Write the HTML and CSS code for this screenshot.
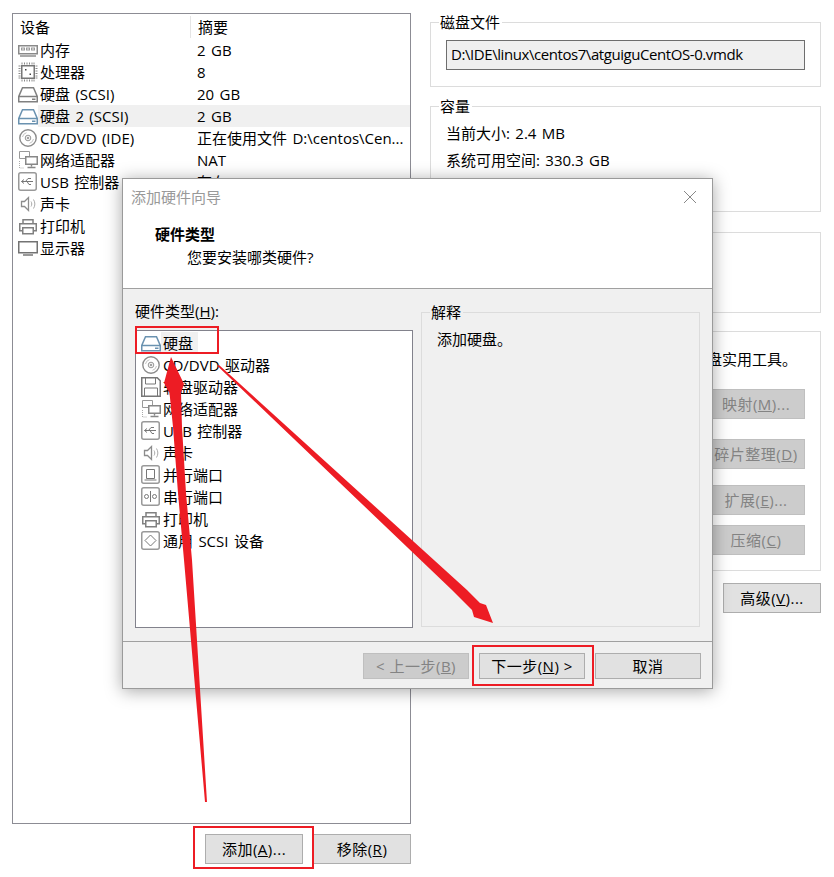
FILE: index.html
```html
<!DOCTYPE html>
<html lang="zh-CN">
<head>
  <meta charset="UTF-8">
  <title>添加硬件向导</title>
  <link rel="stylesheet" href="styles.css">
</head>
<body>
  <svg class="defs" width="0" height="0">
    <symbol id="i-mem" viewBox="0 0 20 20"><path d="M.75 5.750h18.500v8H.75z" fill="none" stroke="#8a8a8a" stroke-width="1.500"/><path d="M2 15h16v2H2z" fill="#aaa"/><path d="M3 7.500h4v3H3zM8 7.500h4v3H8zM13 7.500h4v3h-4z" fill="#999"/><path d="M4 8.500h2v1H4zM9 8.500h2v1H9zM14 8.500h2v1h-2z" fill="#eee"/></symbol>
    <symbol id="i-cpu" viewBox="0 0 20 20"><path d="M3.750 3.750h12.500v12.500H3.750z" fill="none" stroke="#777" stroke-width="1.500"/><path d="M4 .5v2M6.500.5v2M9 .5v2M11.500.5v2M14 .5v2M16 .5v2M4 17.500v2M6.500 17.500v2M9 17.500v2M11.500 17.500v2M14 17.500v2M16 17.500v2M.5 4h2M.5 6.500h2M.5 9h2M.5 11.500h2M.5 14h2M.5 16h2M17.500 4h2M17.500 6.500h2M17.500 9h2M17.500 11.500h2M17.500 14h2M17.500 16h2" stroke="#888"/><path d="M7 7h1.500v1.500H7zM11.500 11.500H13V13h-1.500z" fill="#444"/></symbol>
    <symbol id="i-disk" viewBox="0 0 20 20"><path d="M4.500 3.750h11l3.750 8.750v5.250H.75V12.500zM.75 12.500h18.500" fill="none" stroke="#808080" stroke-width="1.500"/><path d="M14 14.500h3.500V16H14z" fill="#808080"/></symbol>
    <symbol id="i-disk-b" viewBox="0 0 20 20"><path d="M4.500 3.750h11l3.750 8.750v5.250H.75V12.500zM.75 12.500h18.500" fill="none" stroke="#6a92b0" stroke-width="1.500"/><path d="M14 14.500h3.500V16H14z" fill="#6a92b0"/></symbol>
    <symbol id="i-cd" viewBox="0 0 20 20"><circle cx="10" cy="10" r="8.200" fill="#fff" stroke="#8c8c8c" stroke-width="1.400"/><circle cx="10" cy="10" r="2.800" fill="#f0f0f0" stroke="#999"/><circle cx="10" cy="10" r="1" fill="#888"/><path d="M4.500 9a5.500 5.500 0 0 1 4-4.300M15.500 11a5.500 5.500 0 0 1-4 4.300" fill="none" stroke="#c4c4c4"/></symbol>
    <symbol id="i-floppy" viewBox="0 0 20 20"><path d="M.75.75h15.500l3 3v15.500H.75z" fill="#fff" stroke="#777" stroke-width="1.500"/><path d="M4.500 1v6h10V1M3.500 19v-8h13v8" fill="none" stroke="#777"/></symbol>
    <symbol id="i-net" viewBox="0 0 20 20"><path d="M1.500 1.500h10v7h-10z" fill="#fff" stroke="#999"/><path d="M7.750 6.750h11.500v7.500H7.750z" fill="#fff" stroke="#888" stroke-width="1.500"/><path d="M13.500 14.500v2M9.500 17.500h8" stroke="#888" stroke-width="1.400"/><path d="M1.500 11v7h5" fill="none" stroke="#aaa" stroke-dasharray="1 1"/></symbol>
    <symbol id="i-usb" viewBox="0 0 20 20"><rect x=".75" y=".75" width="17.500" height="17.500" rx="2" fill="#fff" stroke="#999" stroke-width="1.500"/><path d="M3.500 9.500h11.500M3.500 9.500l2.500-2M3.500 9.500l2.500 2M7.500 9.500l2.500-3h3M9 9.500l2 3h2" fill="none" stroke="#777"/></symbol>
    <symbol id="i-sound" viewBox="0 0 20 20"><path d="M3.500 7.500h3l4-4v13l-4-4h-3z" fill="#fff" stroke="#8c8c8c" stroke-width="1.300"/><path d="M13 7.500c1 1.500 1 3.500 0 5M15.500 5.500c1.800 3 1.800 6 0 9" fill="none" stroke="#aaa"/></symbol>
    <symbol id="i-print" viewBox="0 0 20 20"><path d="M5 8V3.750h10V8" fill="none" stroke="#808080" stroke-width="1.500"/><path d="M1.750 7.750h16.500v7H1.750z" fill="#fff" stroke="#808080" stroke-width="1.500"/><path d="M4.750 11.750h10.500v6H4.750z" fill="#fff" stroke="#808080" stroke-width="1.500"/></symbol>
    <symbol id="i-screen" viewBox="0 0 20 20"><path d="M.75 3.750h18.500v11H.75z" fill="#fff" stroke="#737373" stroke-width="1.500"/><path d="M5 17h10" stroke="#999" stroke-width="2"/></symbol>
    <symbol id="i-par" viewBox="0 0 20 20"><rect x=".75" y=".75" width="17.500" height="17.500" rx="2" fill="#fff" stroke="#999" stroke-width="1.500"/><path d="M5.500 4.500h8v9h-8zM3.500 15h12" fill="none" stroke="#777"/></symbol>
    <symbol id="i-ser" viewBox="0 0 20 20"><rect x=".75" y=".75" width="17.500" height="17.500" rx="2" fill="#fff" stroke="#999" stroke-width="1.500"/><circle cx="5.500" cy="9.500" r="2" fill="none" stroke="#777"/><circle cx="13.500" cy="9.500" r="2" fill="none" stroke="#777"/><path d="M9.500 4v11" stroke="#777"/></symbol>
    <symbol id="i-scsi" viewBox="0 0 20 20"><rect x=".75" y=".75" width="17.500" height="17.500" rx="2" fill="#fff" stroke="#999" stroke-width="1.500"/><path d="M9.500 4l5.500 5.500-5.500 5.500L4 9.500z" fill="none" stroke="#777"/></symbol>
  </svg>

  <div class="page">
    <div class="left">
      <div class="devices">
        <div class="dev-head">
          <span class="col-name">设备</span>
          <span class="col-sum">摘要</span>
        </div>
        <div class="dev-row"><svg class="ic"><use href="#i-mem"/></svg><span class="col-name">内存</span><span class="col-sum">2 GB</span></div>
        <div class="dev-row"><svg class="ic"><use href="#i-cpu"/></svg><span class="col-name">处理器</span><span class="col-sum">8</span></div>
        <div class="dev-row"><svg class="ic"><use href="#i-disk"/></svg><span class="col-name">硬盘 (SCSI)</span><span class="col-sum">20 GB</span></div>
        <div class="dev-row selected"><svg class="ic"><use href="#i-disk-b"/></svg><span class="col-name">硬盘 2 (SCSI)</span><span class="col-sum">2 GB</span></div>
        <div class="dev-row"><svg class="ic"><use href="#i-cd"/></svg><span class="col-name">CD/DVD (IDE)</span><span class="col-sum">正在使用文件 D:\centos\Cen...</span></div>
        <div class="dev-row"><svg class="ic"><use href="#i-net"/></svg><span class="col-name">网络适配器</span><span class="col-sum">NAT</span></div>
        <div class="dev-row"><svg class="ic"><use href="#i-usb"/></svg><span class="col-name">USB 控制器</span><span class="col-sum">存在</span></div>
        <div class="dev-row"><svg class="ic"><use href="#i-sound"/></svg><span class="col-name">声卡</span></div>
        <div class="dev-row"><svg class="ic"><use href="#i-print"/></svg><span class="col-name">打印机</span></div>
        <div class="dev-row"><svg class="ic"><use href="#i-screen"/></svg><span class="col-name">显示器</span></div>
      </div>
      <div class="left-btns">
        <button class="btn">添加(<u>A</u>)...</button>
        <button class="btn">移除(<u>R</u>)</button>
      </div>
    </div>

    <div class="right">
      <fieldset class="group g-file">
        <legend>磁盘文件</legend>
        <div class="path">D:\IDE\linux\centos7\atguiguCentOS-0.vmdk</div>
      </fieldset>
      <fieldset class="group g-cap">
        <legend>容量</legend>
        <p>当前大小: 2.4 MB</p>
        <p>系统可用空间: 330.3 GB</p>
      </fieldset>
      <fieldset class="group g-blank"></fieldset>
      <fieldset class="group g-util">
        <p class="util-text">盘实用工具。</p>
        <div class="util-btns">
          <button class="btn off">映射(<u>M</u>)...</button>
          <button class="btn off">碎片整理(<u>D</u>)</button>
          <button class="btn off">扩展(<u>E</u>)...</button>
          <button class="btn off">压缩(<u>C</u>)</button>
        </div>
      </fieldset>
      <div class="adv-row"><button class="btn">高级(<u>V</u>)...</button></div>
    </div>
  </div>

  <div class="wizard">
    <div class="wiz-top">
      <div class="wiz-title">添加硬件向导
        <svg class="wiz-close" width="14" height="14" viewBox="0 0 14 14"><path d="M1 1l12 12M13 1L1 13" stroke="#888" fill="none"/></svg>
      </div>
      <div class="wiz-heading">硬件类型</div>
      <div class="wiz-sub">您要安装哪类硬件?</div>
    </div>
    <div class="wiz-body">
      <div class="wiz-list-col">
        <div class="wiz-label">硬件类型(<u>H</u>):</div>
        <div class="hw-list">
          <div class="hw-row"><svg class="ic"><use href="#i-disk-b"/></svg><span class="hw-sel">硬盘</span></div>
          <div class="hw-row"><svg class="ic"><use href="#i-cd"/></svg><span>CD/DVD 驱动器</span></div>
          <div class="hw-row"><svg class="ic"><use href="#i-floppy"/></svg><span>软盘驱动器</span></div>
          <div class="hw-row"><svg class="ic"><use href="#i-net"/></svg><span>网络适配器</span></div>
          <div class="hw-row"><svg class="ic"><use href="#i-usb"/></svg><span>USB 控制器</span></div>
          <div class="hw-row"><svg class="ic"><use href="#i-sound"/></svg><span>声卡</span></div>
          <div class="hw-row"><svg class="ic"><use href="#i-par"/></svg><span>并行端口</span></div>
          <div class="hw-row"><svg class="ic"><use href="#i-ser"/></svg><span>串行端口</span></div>
          <div class="hw-row"><svg class="ic"><use href="#i-print"/></svg><span>打印机</span></div>
          <div class="hw-row"><svg class="ic"><use href="#i-scsi"/></svg><span>通用 SCSI 设备</span></div>
        </div>
      </div>
      <fieldset class="group explain">
        <legend>解释</legend>
        <p>添加硬盘。</p>
      </fieldset>
    </div>
    <div class="wiz-foot">
      <button class="btn off">&lt; 上一步(<u>B</u>)</button>
      <button class="btn">下一步(<u>N</u>) &gt;</button>
      <button class="btn">取消</button>
    </div>
  </div>

  <div class="mark mark-item"></div>
  <div class="mark mark-next"></div>
  <div class="mark mark-add"></div>

  <svg class="arrows" width="834" height="877" viewBox="0 0 834 877">
    <polygon points="205,802 184,560 178,493 173,427 169.500,393 164,383 171,357 184,384 181,393 182,427 186,493 192,560 207,802"/>
    <polygon points="217.500,366 219,365 467,590 480,603 486,605 493,623 474,617 472,610 452,590"/>
  </svg>
</body>
</html>
```

FILE: styles.css
```css
* {
  box-sizing: border-box;
}
html, body {
  margin: 0;
  padding: 0;
}
body {
  width: 834px;
  height: 877px;
  overflow: hidden;
  position: relative;
  background: #fff;
  color: #000;
  font-family: "Open Sans", "Noto Sans CJK SC", sans-serif;
  font-size: 15px;
  line-height: 22px;
  word-spacing: 1.5px;
}
.defs {
  position: absolute;
}
p {
  margin: 0;
}
u {
  text-underline-offset: 1px;
}
.page {
  display: flex;
  padding: 13px 13px 0 12px;
  gap: 19px;
}

/* left column */
.left {
  width: 399px;
}
.devices {
  height: 811px;
  border: 1px solid #8c8c94;
}
.dev-head {
  display: flex;
  height: 25px;
  align-items: center;
}
.dev-head .col-name {
  width: 178px;
  padding-left: 7px;
  border-right: 1px solid #e5e5e5;
}
.dev-head .col-sum {
  padding-left: 7px;
}
.dev-row {
  display: flex;
  align-items: center;
  height: 22px;
  padding-left: 5px;
}
.dev-row .col-name {
  width: 159px;
  padding-left: 2px;
  white-space: nowrap;
}
.dev-row .col-sum {
  white-space: nowrap;
}
.dev-row.selected {
  background: linear-gradient(to right, #fff 25px, #f0f0f0 25px);
}
.ic {
  width: 20px;
  height: 20px;
  flex: none;
}
.left-btns {
  display: flex;
  justify-content: flex-end;
  gap: 10px;
  margin-top: 10px;
}
.btn {
  width: 98px;
  height: 30px;
  padding: 0;
  border: 1px solid #adadad;
  background: #e1e1e1;
  color: #000;
  font: inherit;
  letter-spacing: 0.5px;
  white-space: nowrap;
}
.btn.off {
  background: #ccc;
  border-color: #bfbfbf;
  color: #838383;
}

/* right column */
.right {
  width: 391px;
}
.group {
  margin: 0;
  padding: 0;
  border: 1px solid #dcdcdc;
  min-width: 0;
}
.group legend {
  margin-left: -7px;
  padding: 0 2px 0 1px;
  line-height: 18px;
}
.g-file {
  height: 74px;
  padding: 9px 15px 0;
}
.path {
  height: 30px;
  line-height: 27px;
  padding-left: 4px;
  border: 1px solid #6e6e6e;
  background: #f0f0f0;
  letter-spacing: -0.43px;
  white-space: nowrap;
}
.g-cap {
  height: 115px;
  margin-top: 10px;
  padding: 7px 15px 0;
}
.g-cap p {
  height: 27px;
}
.g-blank {
  height: 81px;
  margin-top: 20px;
}
.g-util {
  height: 240px;
  margin-top: 18px;
  padding: 16px 15px 0;
}
.util-text {
  text-align: right;
  padding-right: 8px;
}
.util-btns {
  display: grid;
  justify-items: end;
  margin-top: 19px;
}
.util-btns .btn:nth-child(2) {
  margin-top: 20px;
}
.util-btns .btn:nth-child(3) {
  margin-top: 16px;
}
.util-btns .btn:nth-child(4) {
  margin-top: 10px;
}
.adv-row {
  display: flex;
  justify-content: flex-end;
  margin-top: 12px;
}

/* wizard dialog */
.wizard {
  position: absolute;
  left: 122px;
  top: 178px;
  width: 591px;
  height: 511px;
  border: 1px solid #9a9a9a;
  background: #f0f0f0;
  box-shadow: 0 2px 16px rgba(0, 0, 0, 0.35);
  display: flex;
  flex-direction: column;
}
.wiz-top {
  height: 110px;
  flex: none;
  background: #fff;
  border-bottom: 1px solid #a0a0a0;
}
.wiz-title {
  display: flex;
  justify-content: space-between;
  align-items: center;
  padding: 7px 15px 0 8px;
  color: #999;
}
.wiz-heading {
  margin: 15px 0 0 32px;
  font-weight: bold;
}
.wiz-sub {
  margin: 1px 0 0 64px;
}
.wiz-body {
  flex: 1;
  display: flex;
  padding: 11px 12px 0;
  gap: 8px;
}
.wiz-list-col {
  width: 278px;
}
.wiz-label {
  height: 30px;
}
.hw-list {
  height: 298px;
  border: 1px solid #82828c;
  background: #fff;
}
.hw-row {
  display: flex;
  align-items: center;
  height: 22px;
  padding-left: 5px;
  white-space: nowrap;
}
.hw-row:first-child {
  height: 23px;
}
.hw-row span {
  padding-left: 2px;
}
.hw-row .hw-sel {
  width: 37px;
  background: #f0f0f0;
}
.explain {
  width: 279px;
  height: 324px;
  margin-top: 3px;
  padding: 7px 15px 0;
}
.wiz-foot {
  flex: none;
  height: 47px;
  border-top: 1px solid #a0a0a0;
  display: flex;
  justify-content: flex-end;
  align-items: flex-start;
  gap: 10px;
  padding: 11px 11px 0 0;
}
.wiz-foot .btn {
  width: 106px;
  height: 26px;
}

/* annotations laid over the screenshot */
.mark {
  position: absolute;
  border: 2px solid #ed1c24;
}
.mark-item {
  left: 135px;
  top: 326px;
  width: 84px;
  height: 28px;
}
.mark-next {
  left: 472px;
  top: 645px;
  width: 122px;
  height: 41px;
}
.mark-add {
  left: 193px;
  top: 826px;
  width: 121px;
  height: 43px;
}
.arrows {
  position: absolute;
  left: 0;
  top: 0;
}
.arrows polygon {
  fill: #ed1c24;
}
```
